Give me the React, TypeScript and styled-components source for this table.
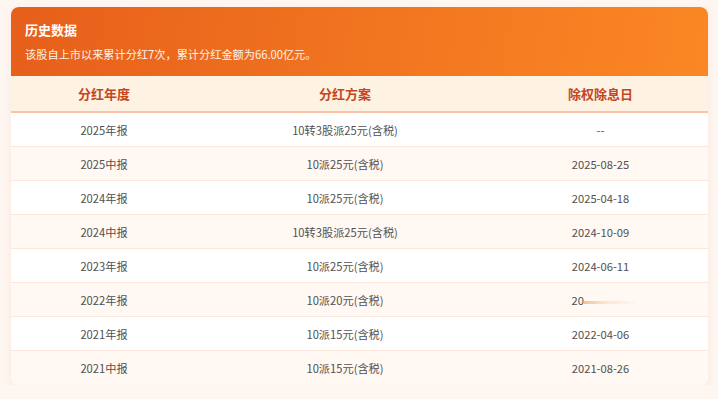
import React from 'react';
import styled, { createGlobalStyle } from 'styled-components';

const GlobalStyle = createGlobalStyle`
  html, body {
    margin: 0;
    padding: 0;
    background: #fdf6f1;
    font-family: "Noto Sans CJK SC", "Noto Sans", sans-serif;
  }
`;

const Page = styled.div`
  padding: 7px 10px 0 11px;
  width: 718px;
  box-sizing: border-box;
`;

const Card = styled.div`
  width: 697px;
  background: #ffffff;
  border-radius: 8px;
  overflow: hidden;
  box-shadow: 0 3px 10px rgba(240, 150, 90, 0.12);
`;

const Banner = styled.div`
  height: 69px;
  box-sizing: border-box;
  padding: 14px 14px 0;
  background: linear-gradient(100deg, #e65f1b 0%, #f27620 55%, #fb8724 100%);
  color: #ffffff;
`;

const Title = styled.div`
  font-size: 13px;
  font-weight: 700;
  line-height: 18px;
`;

const Subtitle = styled.div`
  margin-top: 7px;
  font-size: 11.2px;
  line-height: 16px;
  color: #fff3ea;
`;

const columns = '186px 296px 1fr';

const HeadRow = styled.div`
  display: grid;
  grid-template-columns: ${columns};
  height: 37px;
  align-items: center;
  background: #fef2e3;
  border-bottom: 2px solid #fcc3a7;
  box-sizing: border-box;
`;

const HeadCell = styled.div`
  text-align: center;
  font-size: 13px;
  font-weight: 700;
  color: #c4461d;
`;

const Row = styled.div<{ $alt: boolean }>`
  display: grid;
  grid-template-columns: ${columns};
  height: 34px;
  align-items: center;
  background: ${p => (p.$alt ? '#fff8f3' : '#ffffff')};
  border-bottom: 1px solid #fde7da;
  box-sizing: border-box;
  &:last-child {
    border-bottom: none;
  }
`;

const Cell = styled.div`
  text-align: center;
  font-size: 11.2px;
  color: #505050;
`;

const Smear = styled.span`
  display: inline-block;
  width: 54px;
  height: 3px;
  vertical-align: 1px;
  background: linear-gradient(90deg, #f0c495 0%, #fbe6d2 40%, rgba(255, 248, 243, 0) 100%);
`;

const PartialDate = styled.span`
  display: inline-block;
  width: 58px;
  text-align: left;
  white-space: nowrap;
`;

const rows = [
  ['2025年报', '10转3股派25元(含税)', '--'],
  ['2025中报', '10派25元(含税)', '2025-08-25'],
  ['2024年报', '10派25元(含税)', '2025-04-18'],
  ['2024中报', '10转3股派25元(含税)', '2024-10-09'],
  ['2023年报', '10派25元(含税)', '2024-06-11'],
  ['2022年报', '10派20元(含税)', null],
  ['2021年报', '10派15元(含税)', '2022-04-06'],
  ['2021中报', '10派15元(含税)', '2021-08-26'],
];

const App: React.FC = () => {
  return (
    <>
      <GlobalStyle />
      <Page>
        <Card>
          <Banner>
            <Title>历史数据</Title>
            <Subtitle>该股自上市以来累计分红7次，累计分红金额为66.00亿元。</Subtitle>
          </Banner>
          <HeadRow>
            <HeadCell>分红年度</HeadCell>
            <HeadCell>分红方案</HeadCell>
            <HeadCell>除权除息日</HeadCell>
          </HeadRow>
          {rows.map((r, i) => (
            <Row key={i} $alt={i % 2 === 1}>
              <Cell>{r[0]}</Cell>
              <Cell>{r[1]}</Cell>
              <Cell>
                {r[2] ?? (
                  <PartialDate>
                    20<Smear />
                  </PartialDate>
                )}
              </Cell>
            </Row>
          ))}
        </Card>
      </Page>
    </>
  );
};

export default App;
